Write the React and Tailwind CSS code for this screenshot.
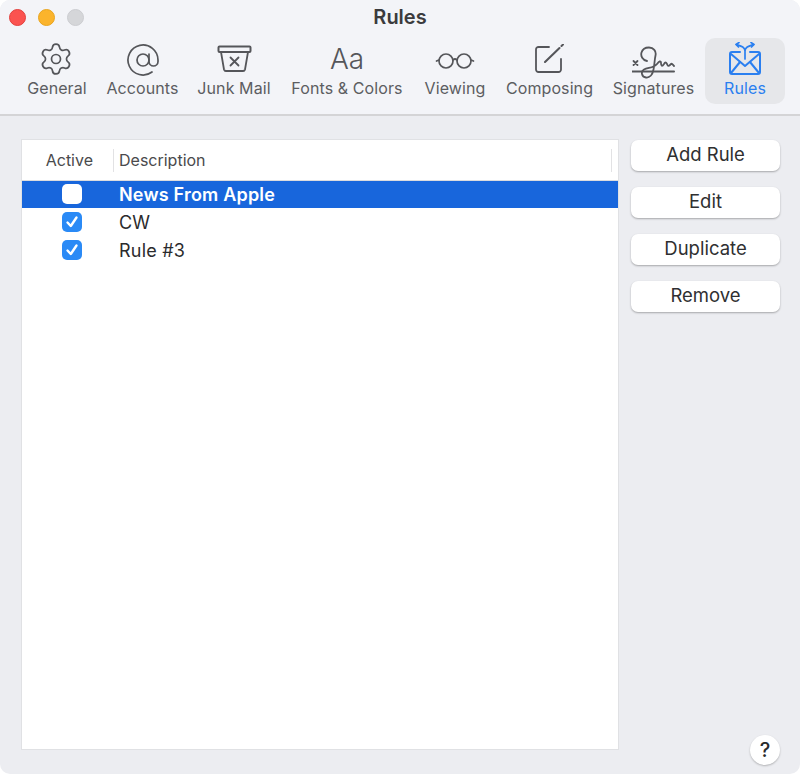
import { Settings, AtSign } from 'lucide-react';

const GearIcon = () => <Settings className="w-[36px] h-[36px] -ml-[2px]" strokeWidth={1.15} />;

const AtIcon = () => <AtSign className="w-[36px] h-[36px] mt-[2px]" strokeWidth={1.15} />;

const JunkIcon = () => (
  <svg width="35" height="28" viewBox="0 0 35 28" fill="none" stroke="currentColor" strokeWidth="1.8" strokeLinecap="round" strokeLinejoin="round">
    <rect x="1.5" y="1.5" width="32" height="5.5" rx="1" strokeWidth="2" />
    <path d="M4 7 L7 24.5 a2 2 0 0 0 2 1.5 H26 a2 2 0 0 0 2-1.5 L31 7" />
    <path d="M13.5 12.5 L21.5 20.5 M21.5 12.5 L13.5 20.5" />
  </svg>
);

const GlassesIcon = () => (
  <svg width="40" height="18" viewBox="0 0 40 18" fill="none" stroke="currentColor" strokeWidth="1.7" strokeLinecap="round" className="mt-[4px]">
    <circle cx="11" cy="9" r="7" />
    <circle cx="29" cy="9" r="7" />
    <path d="M18 8 Q20 6 22 8 M4 8 L1.5 9 M36 8 L38.5 9" />
  </svg>
);

const ComposeIcon = () => (
  <svg width="29" height="30" viewBox="0 0 29 30" fill="none" stroke="currentColor" strokeWidth="1.8" strokeLinecap="round" strokeLinejoin="round">
    <path d="M14 3 H3.5 a2.5 2.5 0 0 0-2.5 2.5 V25.5 a2.5 2.5 0 0 0 2.5 2.5 H23.5 a2.5 2.5 0 0 0 2.5-2.5 V15" />
    <path d="M10 18 L24.5 4" strokeWidth="2.1" />
    <path d="M26.5 2 L28 0.5" strokeWidth="2" />
  </svg>
);

const SignatureIcon = () => (
  <svg width="43" height="33" viewBox="0 0 43 33" fill="none" stroke="currentColor" strokeWidth="1.8" strokeLinecap="round" strokeLinejoin="round" className="mt-[6px]">
    <path d="M0.5 25.5 H42" strokeWidth="2" />
    <path d="M1.5 15 L5.5 19 M5.5 15 L1.5 19" />
    <path d="M15 15 C10.5 14 8.5 10 9.5 6.5 C10.5 3 13.5 1.5 17 1.5 C21.5 1.5 24.5 5 23.5 9.5 C22.5 14 22.5 19 21.5 23.5 C20.5 29 17.5 32 14 31.5 C9.5 31 8.5 25.5 12 23.5 C16 21.5 22 22 25 18 C27 15.5 29 14 29 17 C29 20 30 21 32 18 C33 16 34 16 35 18 C36 21 37 20 39 18 C40 17 41 19 42 20" />
  </svg>
);

const RulesIcon = () => (
  <svg width="32" height="33" viewBox="0 0 32 33" fill="none" stroke="currentColor" strokeWidth="2" strokeLinecap="round" strokeLinejoin="round">
    <path d="M11 10 H3 a2 2 0 0 0-2 2 V30 a2 2 0 0 0 2 2 H29 a2 2 0 0 0 2-2 V12 a2 2 0 0 0-2-2 H21" />
    <path d="M2 12 L16 24 L30 12" />
    <path d="M2 31 L11 20 M30 31 L21 20" />
    <path d="M16 17 V9 C16 5 12 4 7.5 2.5 M16 9 C16 5 20 4 24.5 2.5" strokeWidth="1.7" />
    <path d="M10 0.5 L7 2.5 L9.5 5 M22 0.5 L25 2.5 L22.5 5" strokeWidth="1.7" />
  </svg>
);

const tabs = [
  { label: 'General', width: 'w-[60px]', icon: <GearIcon /> },
  { label: 'Accounts', width: 'w-[71px]', icon: <AtIcon /> },
  { label: 'Junk Mail', width: 'w-[72px]', icon: <JunkIcon /> },
  { label: 'Fonts & Colors', width: 'w-[114px]', icon: <span className="text-[28px] leading-none font-light">Aa</span> },
  { label: 'Viewing', width: 'w-[62px]', icon: <GlassesIcon /> },
  { label: 'Composing', width: 'w-[87px]', icon: <ComposeIcon /> },
  { label: 'Signatures', width: 'w-[81px]', icon: <SignatureIcon /> },
];

const RuleRow = ({ checked, selected, label }) => (
  <div className={`flex items-center ${selected ? 'h-[27px] bg-[#1866dc] text-white font-semibold' : 'h-[28px] text-[#2b2b2d]'}`}>
    <div className="w-[97px] flex justify-center pl-[2px]">
      {checked ? (
        <div className="w-[20px] h-[20px] rounded-[5px] bg-[#2a8af6] flex items-center justify-center">
          <svg width="14" height="14" viewBox="0 0 14 14" fill="none" stroke="white" strokeWidth="2.4" strokeLinecap="round" strokeLinejoin="round">
            <path d="M2.5 7.5 L5.8 11 L11.5 2.5" />
          </svg>
        </div>
      ) : (
        <div className="w-[20px] h-[20px] mb-[1px] rounded-[5px] bg-white" />
      )}
    </div>
    <span className="text-[18px] tracking-[0.2px]">{label}</span>
  </div>
);

const SideButton = ({ children }) => (
  <button className="w-[149px] h-[31px] pb-[2px] bg-white rounded-[7px] text-[18.5px] text-[#2f2f31] shadow-[0_1px_2px_rgba(0,0,0,0.3)]">
    {children}
  </button>
);

const App = () => {
  return (
    <div className="w-[800px] h-[774px] bg-[#ecedf1] flex flex-col overflow-hidden rounded-[10px] font-['Inter',sans-serif]">
      <div className="h-[116px] shrink-0 bg-[#f3f4f8] border-b-2 border-[#d4d4d6] relative">
        <div className="absolute left-[9px] top-[9px] flex gap-[12px]">
          <div className="w-[17px] h-[17px] rounded-full bg-[#fb5350] border border-[#e2403d]" />
          <div className="w-[17px] h-[17px] rounded-full bg-[#fbb42c] border border-[#e8a41f]" />
          <div className="w-[17px] h-[17px] rounded-full bg-[#d5d6d9] border border-[#cbccd0]" />
        </div>
        <div className="text-center pt-[5px] text-[20px] leading-[24px] font-semibold text-[#3b3b3d]">Rules</div>
        <div className="flex items-start pl-[27px] pt-[9px] gap-[20px]">
          {tabs.map((tab) => (
            <div key={tab.label} className={`${tab.width} flex flex-col items-center text-[#55565a]`}>
              <div className="h-[40px] pt-[2px] flex items-center justify-center">{tab.icon}</div>
              <span className="text-[16px] leading-[20px] tracking-[0.1px] whitespace-nowrap text-[#5c5d61]">{tab.label}</span>
            </div>
          ))}
          <div className="w-[80px] h-[66px] -ml-[9px] rounded-[10px] bg-[#e6e7ea] flex flex-col items-center text-[#2a7ff0]">
            <div className="h-[40px] flex items-center justify-center"><RulesIcon /></div>
            <span className="text-[16px] leading-[20px] tracking-[0.1px]">Rules</span>
          </div>
        </div>
      </div>

      <div className="flex-1 flex pl-[21px] pr-[20px] pt-[23px] pb-[24px] gap-[12px] relative">
        <div className="w-[598px] bg-white border border-[#e0e1e4] flex flex-col">
          <div className="h-[41px] flex items-center border-b border-[#dcdcde] text-[16px] text-[#4a4a4c]">
            <span className="w-[71px] text-right whitespace-nowrap">Active</span>
            <div className="ml-[20px] w-px h-[23px] bg-[#e2e2e4]" />
            <span className="ml-[5px]">Description</span>
            <div className="ml-auto mr-[6px] w-px h-[23px] bg-[#e2e2e4]" />
          </div>
          <RuleRow selected label="News From Apple" />
          <RuleRow checked label="CW" />
          <RuleRow checked label="Rule #3" />
        </div>
        <div className="flex flex-col gap-[16px] pt-[1px]">
          <SideButton>Add Rule</SideButton>
          <SideButton>Edit</SideButton>
          <SideButton>Duplicate</SideButton>
          <SideButton>Remove</SideButton>
        </div>
        <button className="absolute right-[20px] bottom-[9px] w-[30px] h-[30px] rounded-full bg-white text-[20px] font-medium text-[#2a2a2c] shadow-[0_1px_2px_rgba(0,0,0,0.25)]">?</button>
      </div>
    </div>
  );
};

export default App;
